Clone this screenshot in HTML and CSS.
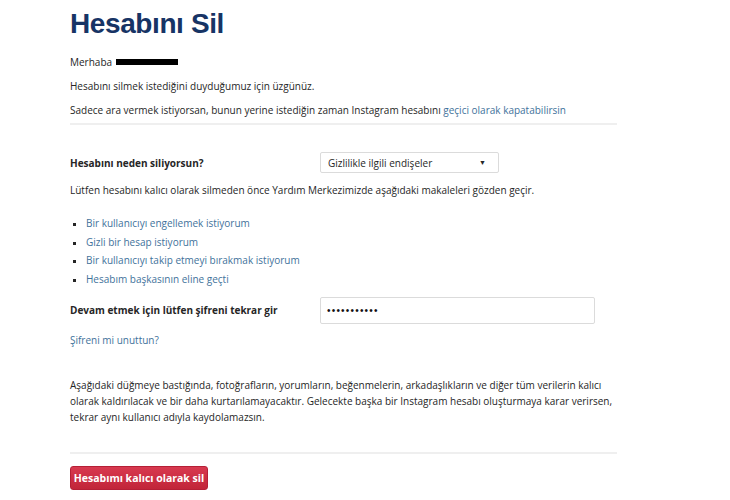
FILE: index.html
```html
<!DOCTYPE html>
<html lang="tr">
<head>
<meta charset="utf-8">
<title>Hesabını Sil</title>
<link rel="stylesheet" href="styles.css">
</head>
<body>
<main class="page">
  <h1 class="title">Hesabını Sil</h1>
  <p class="greet">Merhaba <span class="redact"></span></p>
  <p class="line">Hesabını silmek istediğini duyduğumuz için üzgünüz.</p>
  <p class="line">Sadece ara vermek istiyorsan, bunun yerine istediğin zaman Instagram hesabını <a class="link" href="#">geçici olarak kapatabilirsin</a></p>
  <hr class="rule rule-top">
  <div class="field field-reason">
    <label class="label">Hesabını neden siliyorsun?</label>
    <div class="select">
      <span>Gizlilikle ilgili endişeler</span>
      <span class="caret">▼</span>
    </div>
  </div>
  <p class="line line-help">Lütfen hesabını kalıcı olarak silmeden önce Yardım Merkezimizde aşağıdaki makaleleri gözden geçir.</p>
  <ul class="articles">
    <li><a class="link" href="#">Bir kullanıcıyı engellemek istiyorum</a></li>
    <li><a class="link" href="#">Gizli bir hesap istiyorum</a></li>
    <li><a class="link" href="#">Bir kullanıcıyı takip etmeyi bırakmak istiyorum</a></li>
    <li><a class="link" href="#">Hesabım başkasının eline geçti</a></li>
  </ul>
  <div class="field field-pass">
    <label class="label">Devam etmek için lütfen şifreni tekrar gir</label>
    <div class="input">•••••••••••</div>
  </div>
  <p class="forgot"><a class="link" href="#">Şifreni mi unuttun?</a></p>
  <p class="warning">Aşağıdaki düğmeye bastığında, fotoğrafların, yorumların, beğenmelerin, arkadaşlıkların ve diğer tüm verilerin kalıcı olarak kaldırılacak ve bir daha kurtarılamayacaktır. Gelecekte başka bir Instagram hesabı oluşturmaya karar verirsen, tekrar aynı kullanıcı adıyla kaydolamazsın.</p>
  <hr class="rule rule-bottom">
  <button class="danger">Hesabımı kalıcı olarak sil</button>
</main>
</body>
</html>
```
FILE: styles.css
```css
* { box-sizing: border-box; }
html, body { margin: 0; background: #fff; }
body {
  font-family: "Open Sans", "Noto Sans", sans-serif;
  font-size: 10px;
  color: #262626;
}
.page {
  width: 617px;
  padding: 8px 0 0 70px;
  display: flex;
  flex-direction: column;
}
.title {
  margin: 0;
  font-family: "Liberation Sans", Arial, sans-serif;
  font-weight: bold;
  font-size: 28px;
  color: #173465;
  line-height: 32px;
  letter-spacing: -0.4px;
}
.greet { margin: 15px 0 0; line-height: 14px; display: flex; align-items: center; gap: 4px; }
.redact { display: inline-block; width: 62px; height: 6px; background: #000; }
.line { margin: 10px 0 0; line-height: 14px; }
.link { color: #3f729b; text-decoration: none; }
.rule { border: 0; border-top: 2px solid #efefef; margin: 0; width: 547px; }
.rule-top { margin-top: 6px; }
.field { display: flex; align-items: center; }
.label { font-weight: bold; width: 250px; }
.field-reason { margin-top: 27px; }
.select {
  width: 179px; height: 21px;
  border: 1px solid #dbdbdb; border-radius: 2px;
  display: flex; align-items: center; justify-content: space-between;
  padding: 0 12px 0 7px;
}
.caret { font-size: 7px; }
.line-help { margin-top: 10px; }
.articles { margin: 17px 0 0; padding: 0 0 0 16px; list-style: square; }
.articles li { line-height: 18.7px; }
.articles li::marker { color: #262626; font-size: 9px; }
.field-pass { margin-top: 8px; }
.input {
  width: 275px; height: 27px;
  border: 1px solid #dbdbdb; border-radius: 2px;
  display: flex; align-items: center; padding: 0 6px;
  font-family: "Liberation Sans", Arial, sans-serif;
  font-size: 10px; letter-spacing: 1.2px; color: #111;
}
.forgot { margin: 9px 0 0; line-height: 14px; }
.warning { margin: 30px 0 0; line-height: 16px; width: 545px; }
.rule-bottom { margin-top: 27px; }
.danger {
  align-self: flex-start;
  margin-top: 12px;
  width: 138px; height: 24px;
  border: 1px solid #b51f36; border-radius: 3px;
  background: linear-gradient(#d8394f, #c12539);
  color: #fff; font-family: "Open Sans", sans-serif; font-weight: bold; font-size: 10.5px;
  padding: 0;
}
```
